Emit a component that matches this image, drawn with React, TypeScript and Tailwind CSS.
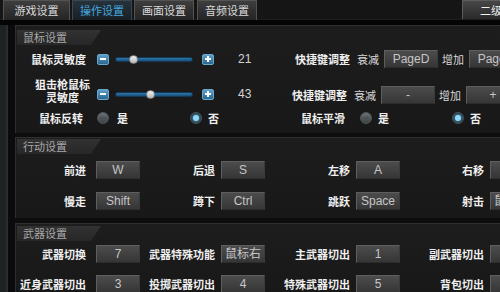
import React from "react";

const cjk = "font-['Microsoft_YaHei','Noto_Sans_CJK_SC',sans-serif]";
const lat = "font-['Liberation_Sans','Noto_Sans_CJK_SC',sans-serif]";

function Tab({ label, active, cls }: { label: string; active?: boolean; cls: string }) {
  return (
    <div
      className={
        cls +
        " h-[20px] shrink-0 flex items-center justify-center text-[11px] border border-b-0 whitespace-nowrap " +
        (active
          ? "bg-linear-to-b from-[#26323b] to-[#182026] border-[#3a4650] text-[#46a7de]"
          : "bg-linear-to-b from-[#3e3e3e] to-[#242424] border-[#535353] text-[#dadada]")
      }
    >
      {label}
    </div>
  );
}

function KeyBox({ v, cls = "w-[44px]" }: { v: string; cls?: string }) {
  return (
    <div
      className={
        cls +
        " h-[18px] shrink-0 flex items-center justify-center border border-[#5e5e5e] border-b-[#2c2c2c] border-r-[#3a3a3a] bg-linear-to-b from-[#4c4c4c] to-[#363636] text-[12px] text-[#c6c6c6] whitespace-nowrap overflow-hidden " +
        lat
      }
    >
      {v}
    </div>
  );
}

function Label({ t, cls }: { t: string; cls: string }) {
  return (
    <div className={cls + " shrink-0 text-right text-[11px] font-bold text-[#efefef] leading-none whitespace-nowrap"}>
      {t}
    </div>
  );
}

function Small({ t, cls }: { t: string; cls: string }) {
  return <span className={cls + " shrink-0 whitespace-nowrap text-[11px] text-[#d8d8d8] leading-none"}>{t}</span>;
}

function Section({ title, cls, children }: { title: string; cls: string; children: React.ReactNode }) {
  return (
    <div className={cls + " shrink-0 bg-linear-to-b from-[#1d1d1d] to-[#181818] border-l border-t border-[#2f2f2f] flex flex-col"}>
      <div className="ml-[1px] w-[84px] h-[15px] shrink-0 bg-linear-to-b from-[#323232] to-[#272727] [clip-path:polygon(0_0,100%_0,calc(100%-10px)_100%,0_100%)] text-[11px] text-[#a8a8a8] pl-[6px] leading-[15px] whitespace-nowrap">
        {title}
      </div>
      {children}
    </div>
  );
}

function PmBtn({ plus }: { plus?: boolean }) {
  return (
    <div className="w-[12px] h-[11px] shrink-0 rounded-[2px] border border-[#6aa7cc] bg-linear-to-b from-[#5d9fc8] to-[#2a6891] flex items-center justify-center relative">
      <div className="w-[6px] h-[2px] bg-white" />
      {plus && <div className="absolute w-[2px] h-[6px] bg-white" />}
    </div>
  );
}

function Slider({ pos }: { pos: number }) {
  return (
    <div className="w-[78px] h-[9px] shrink-0 relative flex items-center">
      <div className="w-full h-[5px] rounded-full bg-linear-to-b from-[#2d78ad] to-[#1a4f77] border border-[#123a58]" />
      <div
        className="absolute top-[0px] w-[9px] h-[9px] rounded-full bg-linear-to-b from-[#f2f2f2] to-[#b8b8b8] border border-[#8a8a8a]"
        style={{ left: pos - 4.5 }}
      />
    </div>
  );
}

function Radio({ on }: { on?: boolean }) {
  return on ? (
    <div className="w-[12px] h-[12px] shrink-0 rounded-full bg-[#2c3a43] border border-[#46535b] flex items-center justify-center">
      <div className="w-[6px] h-[6px] rounded-full bg-[#8fd8fb] shadow-[0_0_3px_#5bc0f0]" />
    </div>
  ) : (
    <div className="w-[12px] h-[12px] shrink-0 rounded-full bg-linear-to-b from-[#6a7073] to-[#3d4245] border border-[#50575a] flex items-center justify-center">
      <div className="w-[6px] h-[2px] bg-[#4b5154]" />
    </div>
  );
}

function Opt({ t }: { t: string }) {
  return <span className="shrink-0 whitespace-nowrap text-[11px] font-bold text-[#efefef] leading-none">{t}</span>;
}

const labelW = ["w-[70px]", "w-[75px]", "w-[85px]", "w-[84px]"];
const boxM = ["ml-[10px]", "ml-[6px]", "ml-[6px]", "ml-[6px]"];

function KeyRow({ items, cls }: { items: [string, string][]; cls: string }) {
  return (
    <div className={cls + " h-[20px] shrink-0 flex items-center"}>
      {items.map(([l, v], i) => (
        <React.Fragment key={i}>
          <Label t={l} cls={labelW[i]} />
          <div className={boxM[i] + " shrink-0"}>
            <KeyBox v={v} />
          </div>
        </React.Fragment>
      ))}
    </div>
  );
}

export default function App() {
  return (
    <div className={"w-[500px] h-[292px] overflow-hidden bg-[#0d0d0d] flex flex-col " + cjk}>
      {/* tab bar */}
      <div className="h-[20px] shrink-0 flex bg-[#151515] border-b border-[#1e1e1e]">
        <Tab label="游戏设置" cls="ml-[3px] w-[67px]" />
        <Tab label="操作设置" active cls="ml-[2px] w-[60px]" />
        <Tab label="画面设置" cls="ml-[2px] w-[60px]" />
        <Tab label="音频设置" cls="ml-[3px] w-[60px]" />
        <div className="flex-1" />
        <div className="w-[38px] h-[19px] shrink-0 bg-linear-to-b from-[#474747] to-[#2a2a2a] border-l border-t border-[#5c5c5c] text-[11px] text-[#f0f0f0] pl-[17px] leading-[18px] whitespace-nowrap overflow-hidden">
          二级菜单
        </div>
      </div>
      <div className="h-[5px] shrink-0 bg-[#050505]" />
      {/* body */}
      <div className="flex-1 flex min-h-0">
        <div className="w-[8px] shrink-0 bg-[#1f2223] border-r-2 border-[#2a2e30]" />
        <div className="w-[7px] shrink-0 bg-[#0b0b0b]" />
        <div className="flex-1 flex flex-col min-w-0 overflow-hidden">
          {/* 鼠标设置 */}
          <Section title="鼠标设置" cls="h-[108px] pt-[4px]">
            <div className="mt-[4px] h-[20px] shrink-0 flex items-center">
              <Label t="鼠标灵敏度" cls="w-[70px]" />
              <div className="ml-[11px] shrink-0"><PmBtn /></div>
              <div className="ml-[6px] shrink-0"><Slider pos={18} /></div>
              <div className="ml-[9px] shrink-0"><PmBtn plus /></div>
              <div className={"ml-[24px] w-[16px] shrink-0 text-[12px] text-[#d4d4d4] " + lat}>21</div>
              <Label t="快捷键调整" cls="ml-[2px] w-[94px]" />
              <Small t="衰减" cls="ml-[7px]" />
              <div className="ml-[5px] shrink-0"><KeyBox v="PageD" cls="w-[54px]" /></div>
              <Small t="增加" cls="ml-[4px]" />
              <div className="ml-[5px] shrink-0"><KeyBox v="PageU" cls="w-[54px]" /></div>
            </div>
            <div className="mt-[10px] h-[28px] shrink-0 flex items-center">
              <div className="w-[73px] shrink-0 pl-[20px] mb-[4px] flex flex-col items-center gap-[2px] text-[11px] font-bold text-[#efefef] leading-none whitespace-nowrap">
                <span>狙击枪鼠标</span>
                <span>灵敏度</span>
              </div>
              <div className="ml-[8px] mt-[2px] shrink-0"><PmBtn /></div>
              <div className="ml-[6px] mt-[2px] shrink-0"><Slider pos={35} /></div>
              <div className="ml-[9px] mt-[2px] shrink-0"><PmBtn plus /></div>
              <div className={"ml-[24px] mt-[2px] w-[16px] shrink-0 text-[12px] text-[#d4d4d4] " + lat}>43</div>
              <Label t="快捷键调整" cls="ml-[2px] mt-[4px] w-[91px]" />
              <Small t="衰减" cls="ml-[7px] mt-[4px]" />
              <div className="ml-[5px] mt-[4px] shrink-0"><KeyBox v="-" cls="w-[54px]" /></div>
              <Small t="增加" cls="ml-[4px] mt-[4px]" />
              <div className="ml-[5px] mt-[4px] shrink-0"><KeyBox v="+" cls="w-[54px]" /></div>
            </div>
            <div className="mt-[1px] h-[20px] shrink-0 flex items-center">
              <Label t="鼠标反转" cls="w-[67px]" />
              <div className="ml-[14px] w-[93px] shrink-0 flex items-center gap-[8px]">
                <Radio />
                <Opt t="是" />
              </div>
              <div className="w-[66px] shrink-0 flex items-center gap-[6px]">
                <Radio on />
                <Opt t="否" />
              </div>
              <Label t="鼠标平滑" cls="w-[89px]" />
              <div className="ml-[15px] w-[92px] shrink-0 flex items-center gap-[6px]">
                <Radio />
                <Opt t="是" />
              </div>
              <div className="shrink-0 flex items-center gap-[6px]">
                <Radio on />
                <Opt t="否" />
              </div>
            </div>
          </Section>
          <div className="h-[4px] shrink-0" />
          {/* 行动设置 */}
          <Section title="行动设置" cls="h-[81px] pt-[1px]">
            <KeyRow
              cls="mt-[6px]"
              items={[
                ["前进", "W"],
                ["后退", "S"],
                ["左移", "A"],
                ["右移", "D"],
              ]}
            />
            <KeyRow
              cls="mt-[11px]"
              items={[
                ["慢走", "Shift"],
                ["蹲下", "Ctrl"],
                ["跳跃", "Space"],
                ["射击", "鼠标左"],
              ]}
            />
          </Section>
          <div className="h-[5px] shrink-0" />
          {/* 武器设置 */}
          <Section title="武器设置" cls="flex-1 pt-[2px]">
            <KeyRow
              cls="mt-[3px]"
              items={[
                ["武器切换", "7"],
                ["武器特殊功能", "鼠标右"],
                ["主武器切出", "1"],
                ["副武器切出", "2"],
              ]}
            />
            <KeyRow
              cls="mt-[10px]"
              items={[
                ["近身武器切出", "3"],
                ["投掷武器切出", "4"],
                ["特殊武器切出", "5"],
                ["背包切出", "B"],
              ]}
            />
          </Section>
        </div>
      </div>
    </div>
  );
}
